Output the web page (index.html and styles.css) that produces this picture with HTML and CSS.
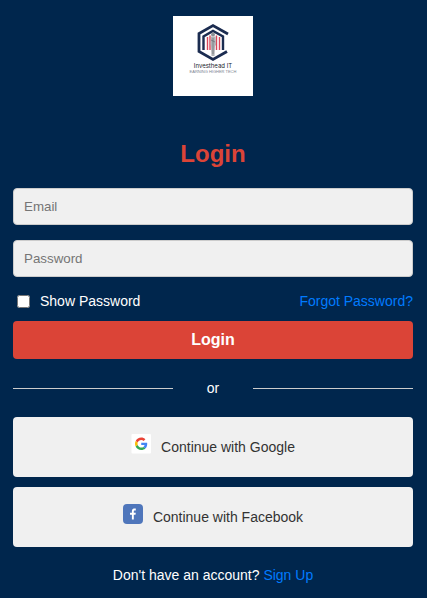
FILE: index.html
```html
<!DOCTYPE html>
<html lang="en">
<head>
  <meta charset="utf-8">
  <meta name="viewport" content="width=device-width, initial-scale=1">
  <title>Login</title>
  <link rel="stylesheet" href="styles.css">
</head>
<body>
  <main class="login">
    <svg class="logo" viewBox="0 0 80 80" role="img" aria-label="Investhead IT">
      <rect width="80" height="80" fill="#fff"/>
      <g fill="none" stroke="#1b2c50">
        <path d="M55 18 40 9.500 26 17.500V35.500L40 43.500 54 35.500" stroke-width="2.800"/>
        <path d="M30.500 34V20.500L40 15 50 20.500V34" stroke-width="2.400"/>
      </g>
      <path d="M34.500 21V34M37 19.500V34M43.500 19.500V34M46.500 21V34" stroke="#d9485a" stroke-width="1.400"/>
      <circle cx="40" cy="18.500" r="2" fill="#8b8f94"/>
      <path d="M38 20.500H42.500L43 29 42 30 41.500 40H38.500L38 30 37.500 28Z" fill="#b0b2b5"/>
      <path d="M40 22V38M38 24 42 26" stroke="#5d6269" stroke-width=".6"/>
      <text class="logo-name" x="40" y="52" text-anchor="middle">Investhead IT</text>
      <text class="logo-tagline" x="40" y="57" text-anchor="middle">EARNING HIGHER TECH</text>
    </svg>

    <h1 class="title">Login</h1>

    <form class="form">
      <input class="field" type="email" placeholder="Email" aria-label="Email">
      <input class="field" type="password" placeholder="Password" aria-label="Password">
      <div class="options">
        <label class="show"><input class="check" type="checkbox">Show Password</label>
        <a class="link" href="#">Forgot Password?</a>
      </div>
      <button class="submit" type="submit">Login</button>
    </form>

    <div class="divider">or</div>

    <div class="providers">
      <button class="provider" type="button">
        <svg class="icon" viewBox="0 0 20 20" aria-hidden="true">
          <rect x=".5" width="19.500" height="19.500" rx="1" fill="#fff"/>
          <g transform="translate(4 3.500) scale(.26)">
            <path fill="#ea4335" d="M24 9.500c3.540 0 6.710 1.220 9.210 3.600l6.850-6.850C35.900 2.380 30.470 0 24 0 14.620 0 6.510 5.380 2.560 13.220l7.980 6.190C12.430 13.720 17.740 9.500 24 9.500z"/>
            <path fill="#4285f4" d="M46.980 24.550c0-1.570-.15-3.090-.38-4.550H24v9.020h12.940c-.58 2.960-2.260 5.480-4.780 7.180l7.730 6c4.510-4.180 7.090-10.360 7.090-17.650z"/>
            <path fill="#fbbc05" d="M10.530 28.590c-.48-1.450-.76-2.990-.76-4.590s.27-3.140.76-4.590l-7.980-6.190C.92 16.460 0 20.120 0 24c0 3.880.92 7.540 2.560 10.780l7.970-6.190z"/>
            <path fill="#34a853" d="M24 48c6.480 0 11.930-2.130 15.890-5.810l-7.730-6c-2.150 1.450-4.920 2.300-8.160 2.300-6.260 0-11.570-4.220-13.470-9.910l-7.980 6.190C6.510 42.620 14.620 48 24 48z"/>
          </g>
        </svg>
        <span>Continue with Google</span>
      </button>
      <button class="provider" type="button">
        <svg class="icon" viewBox="0 0 20 20" aria-hidden="true">
          <rect width="20" height="20" rx="4" fill="#4f76bb"/>
          <path d="M8.900 15.500V10.700H7V8.800H8.900V7.300C8.900 5.500 9.800 4.500 11.400 4.500H12.800V6.400H11.900C11 6.400 10.800 6.800 10.800 7.500V8.800H12.800L12.500 10.700H10.800V15.500Z" fill="#fff"/>
        </svg>
        <span>Continue with Facebook</span>
      </button>
    </div>

    <p class="signup">Don't have an account? <a class="link" href="#">Sign Up</a></p>
  </main>
</body>
</html>
```

FILE: styles.css
```css
* {
  box-sizing: border-box;
}

body {
  margin: 0;
  background: #00264d;
  color: #fff;
  font-family: "Liberation Sans", Arial, sans-serif;
  font-size: 14px;
  line-height: 16px;
}

.login {
  display: flex;
  flex-direction: column;
  padding: 16px 14px 12px 13px;
}

.logo {
  width: 80px;
  height: 80px;
  align-self: center;
}

.logo-name {
  font-family: Inter, "Liberation Sans", sans-serif;
  font-size: 6px;
  fill: #20242c;
}

.logo-tagline {
  font-size: 4px;
  fill: #7c8390;
}

.title {
  margin: 44px 0 20px;
  color: #db4437;
  font-size: 24px;
  line-height: 28px;
  text-align: center;
}

.form {
  display: flex;
  flex-direction: column;
}

.field {
  width: 100%;
  height: 37px;
  margin: 0 0 15px;
  padding: 10px;
  border: 1px solid #ccc;
  border-radius: 4px;
  background: #f0f0f0;
  font-family: inherit;
}

.options {
  display: flex;
  justify-content: space-between;
  align-items: center;
  margin-bottom: 11px;
  line-height: 18px;
}

.show {
  display: flex;
  align-items: center;
  gap: 10px;
}

.check {
  width: 13px;
  height: 13px;
  margin: 0 0 0 4px;
}

.link {
  color: #007bff;
  text-decoration: none;
}

.submit {
  height: 38px;
  border: 0;
  border-radius: 4px;
  background: #db4437;
  color: #fff;
  font-family: inherit;
  font-size: 16px;
  font-weight: bold;
}

.divider {
  display: grid;
  grid-template-columns: 1fr 80px 1fr;
  align-items: center;
  margin: 21px 0;
  text-align: center;
}

.divider::before,
.divider::after {
  height: 1px;
  background: #ccc;
  content: "";
}

.providers {
  display: grid;
  gap: 10px;
}

.provider {
  display: flex;
  justify-content: center;
  align-items: flex-start;
  gap: 10px;
  height: 60px;
  padding: 17px 10px;
  border: 0;
  border-radius: 4px;
  background: #f0f0f0;
  color: #333;
  font-family: inherit;
  font-size: 14px;
  line-height: 26px;
}

.icon {
  width: 20px;
  height: 20px;
}

.signup {
  margin: 20px 0 0;
  text-align: center;
}
```
